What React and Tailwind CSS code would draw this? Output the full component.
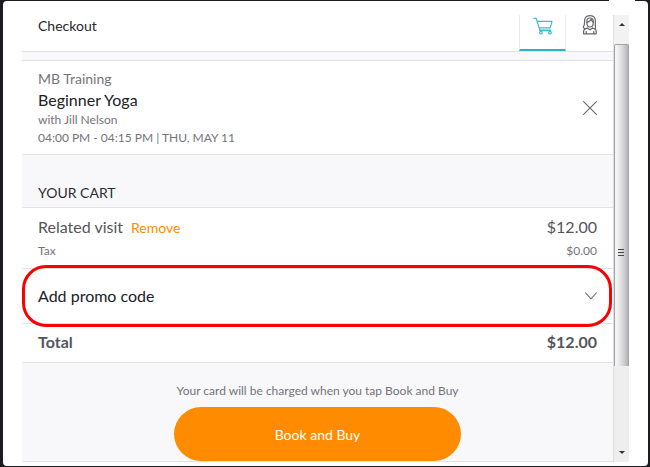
import { useState } from "react";

const visit = {
  studio: "MB Training",
  name: "Beginner Yoga",
  staff: "with Jill Nelson",
  time: "04:00 PM - 04:15 PM | THU, MAY 11",
};

function CartIcon() {
  return (
    <svg width="20" height="18" viewBox="0 0 20 18" fill="none" stroke="currentColor" strokeWidth="1.2" strokeLinecap="round" strokeLinejoin="round">
      <path d="M0.8 1.4H3.2L7 13.4" />
      <path d="M4.3 4.4H19L17.2 10.8H6.2" />
      <path d="M7 13.4H17.6" strokeWidth="1.6" />
      <circle cx="7.9" cy="15.7" r="1.3" />
      <circle cx="17" cy="15.7" r="1.3" />
    </svg>
  );
}

function ProfileIcon() {
  return (
    <svg width="16" height="20" viewBox="0 0 16 20" fill="none" stroke="currentColor" strokeWidth="1.2" strokeLinecap="round" strokeLinejoin="round">
      <path d="M3.2 13.6C1.2 13.4 0.8 12 1.8 11C2.9 9.6 2.4 6 2.8 4.2C3.5 1.9 5.5 0.7 8 0.7C10.5 0.7 12.5 1.9 13.2 4.2C13.6 6 13.2 9 13.4 11C13.6 12.4 13.6 13 13.2 13.8" />
      <path d="M4.9 7.4C6.8 7 8.4 5.8 9.2 4.2C9.8 5.6 10.4 6.6 11.3 7.2C11.3 10 10 12 8 12C6 12 4.9 10 4.9 7.4Z" />
      <path d="M4.9 7.2C4.4 4.6 5.6 3 8 3C10.4 3 11.6 4.6 11.3 7.2" />
      <path d="M5.6 13.2L8 14.8L10.4 13.2" />
      <path d="M5.6 13.2C3.2 13.6 1.6 14.6 1.6 16.4V18.8H14.2V16.4C14.2 14.6 12.8 13.6 10.4 13.2" />
      <path d="M4.2 16.4V18.6M11.8 16.4V18.6" />
    </svg>
  );
}

function Scrollbar() {
  return (
    <div className="flex w-4 shrink-0 flex-col border-l border-[#dedede] bg-[#eeeeee]" aria-hidden="true">
      <div className="flex h-[29px] justify-center bg-[#f2f2f2] pt-2">
        <svg width="6" height="3" viewBox="0 0 6 3">
          <path d="M3 0L6 3H0Z" fill="#333" />
        </svg>
      </div>
      <div className="flex grow-[80] basis-0 flex-col items-center justify-center rounded-t-xs border border-b-0 border-[#a3a3a5] bg-linear-to-r from-[#f3f3f4] from-15% via-[#d6d6d8] via-60% to-[#b4b4b8]">
        <div className="flex flex-col gap-0.5 pt-[94px] pr-0.5">
          <span className="h-px w-1.5 bg-[#444]" />
          <span className="h-px w-1.5 bg-[#444]" />
          <span className="h-px w-1.5 bg-[#444]" />
        </div>
      </div>
      <div className="flex grow-[22] basis-0 items-end justify-center pb-2">
        <svg width="6" height="3" viewBox="0 0 6 3">
          <path d="M0 0H6L3 3Z" fill="#333" />
        </svg>
      </div>
    </div>
  );
}

function App() {
  const [tab, setTab] = useState("cart");

  return (
    <div className="relative min-h-screen bg-[#1b1c1f] pt-px pr-0.5 pb-0.5 pl-[3px] font-['Lato',sans-serif]">
      {/* notch in the dark frame */}
      <span className="absolute top-0 right-[15px] h-px w-[26px] bg-white" />
      <main className="flex rounded bg-white pt-3.5 pr-[19px] pb-1 pl-[19px]">
        <div className="min-w-0 flex-1 border-b border-[#e2e2e4] bg-[#f8f8fb]">
          <header className="flex justify-between border-b border-[#e2e2e4] bg-white pl-4">
            <h1 className="text-[14px] leading-[22px] text-[#26272b]">Checkout</h1>
            <nav className="flex">
              <button
                type="button"
                aria-label="Cart"
                onClick={() => setTab("cart")}
                className={`flex h-9 w-[47px] justify-center border-x border-x-[#ececee] border-b-2 pt-0.5 ${
                  tab === "cart" ? "border-b-[#2fb1c4] text-[#43b9ca]" : "border-b-transparent text-[#66676b]"
                }`}
              >
                <CartIcon />
              </button>
              <button
                type="button"
                aria-label="Profile"
                onClick={() => setTab("profile")}
                className={`flex h-9 w-[47px] justify-center border-b-2 ${
                  tab === "profile" ? "border-b-[#2fb1c4] text-[#43b9ca]" : "border-b-transparent text-[#66676b]"
                }`}
              >
                <ProfileIcon />
              </button>
            </nav>
          </header>

          <section className="mt-2 flex items-center justify-between border-y border-[#e2e2e4] bg-white pt-2 pr-4 pb-[7px] pl-4">
            <div className="text-[12px] leading-[18px] text-[#737479]">
              <p className="text-[14px] leading-5">{visit.studio}</p>
              <h2 className="text-[16px] leading-[22px] text-[#202125]">{visit.name}</h2>
              <p>{visit.staff}</p>
              <p>{visit.time}</p>
            </div>
            <button type="button" aria-label="Remove visit" className="text-[#66676b]">
              <svg width="14" height="14" viewBox="0 0 14 14" stroke="currentColor" strokeWidth="1.1" strokeLinecap="round">
                <path d="M0.6 0.6L13.4 13.4M13.4 0.6L0.6 13.4" />
              </svg>
            </button>
          </section>

          <h2 className="px-4 pt-7 pb-1 text-[14px] leading-5 text-[#2c2d31]">YOUR CART</h2>

          <section className="border-y border-[#e2e2e4] bg-white px-4 pt-[7px] pb-[7px]">
            <div className="flex items-baseline justify-between text-[16px] leading-6 text-[#55565b]">
              <p>
                Related visit
                <button type="button" className="ml-2 text-[14px] text-[#ff8c00]">
                  Remove
                </button>
              </p>
              <p>$12.00</p>
            </div>
            <div className="flex justify-between pt-px text-[12px] leading-5 text-[#737479]">
              <p>Tax</p>
              <p>$0.00</p>
            </div>
          </section>

          {/* promo row, ringed in red */}
          <section className="relative bg-white">
            <button type="button" className="flex w-full items-center justify-between px-4 py-[15px] text-[16px] leading-6 text-[#202125]">
              Add promo code
              <svg width="12" height="8" viewBox="0 0 12 8" fill="none" stroke="#77787c" strokeWidth="1.1" strokeLinecap="round" strokeLinejoin="round">
                <path d="M0.6 0.8L6 6.8L11.4 0.8" />
              </svg>
            </button>
            <div className="pointer-events-none absolute -inset-y-1 right-px left-0 rounded-3xl border-[3px] border-[#fa0000]" />
          </section>

          <section className="flex justify-between border-y border-[#e2e2e4] bg-white px-4 pt-1.5 pb-2 text-[16px] leading-6 font-bold text-[#55565b]">
            <p>Total</p>
            <p>$12.00</p>
          </section>

          <footer className="flex flex-col items-center pt-[19px]">
            <p className="text-[12px] leading-[18px] text-[#737479]">Your card will be charged when you tap Book and Buy</p>
            <button type="button" className="mt-[7px] h-[54px] w-[287px] rounded-full bg-[#ff8c00] text-[14px] text-white">
              Book and Buy
            </button>
          </footer>
        </div>
        <Scrollbar />
      </main>
    </div>
  );
}

export default App;
